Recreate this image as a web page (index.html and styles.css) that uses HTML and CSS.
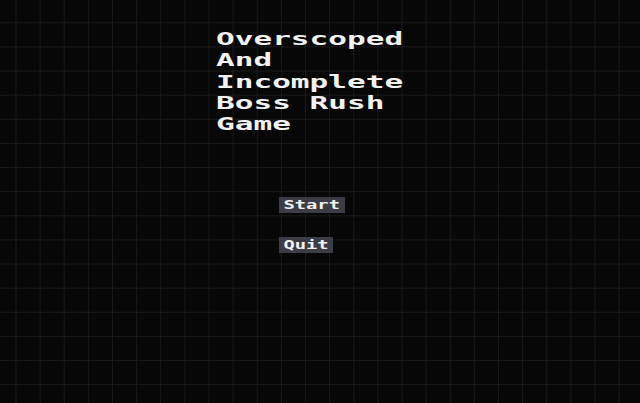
FILE: index.html
```html
<!DOCTYPE html>
<html lang="en">
<head>
  <meta charset="UTF-8">
  <meta name="viewport" content="width=device-width, initial-scale=1.0">
  <title>Overscoped And Incomplete Boss Rush Game</title>
  <link rel="stylesheet" href="styles.css">
</head>
<body>
  <div class="menu">
    <h1 class="title">Overscoped<br>And<br>Incomplete<br>Boss Rush<br>Game</h1>
    <div class="actions">
      <button class="menu-btn" id="startBtn">Start</button>
      <button class="menu-btn" id="quitBtn">Quit</button>
    </div>
  </div>
</body>
</html>
```

FILE: styles.css
```css
/* Main menu */
body {
  margin: 0;
  height: 100vh;
  overflow: hidden;
  font-family: 'DejaVu Sans Mono', 'Liberation Mono', monospace;
  color: #f2f2f2;
  background-color: #070707;
  background-image:
    linear-gradient(to right, #1a1a1a 0 1.4px, transparent 1.4px),
    linear-gradient(to bottom, #1a1a1a 0 1.4px, transparent 1.4px);
  background-size: 24.13px 24.13px;
  background-position: 15.5px 22.3px;
}

.menu {
  padding: 28px 0 0 216px;
}

/* pixel-ish title: narrow mono stretched wide */
.title {
  width: max-content;
  margin: 0;
  font-size: 18.3px;
  font-weight: bold;
  line-height: 21.3px;
  white-space: nowrap;
  transform: scaleX(1.7);
  transform-origin: left top;
}

.actions {
  display: flex;
  flex-direction: column;
  align-items: flex-start;
  gap: 24px;
  margin: 63px 0 0 63px;
}

.menu-btn {
  height: 16px;
  padding: 0 3px;
  border: none;
  border-radius: 0;
  background-color: #3c3c46;
  color: #f2f2f2;
  font-family: inherit;
  font-size: 12.5px;
  font-weight: bold;
  line-height: 16px;
  cursor: pointer;
  transform: scaleX(1.5);
  transform-origin: left top;
}

.menu-btn:hover {
  background-color: #4a4a56;
}
```
